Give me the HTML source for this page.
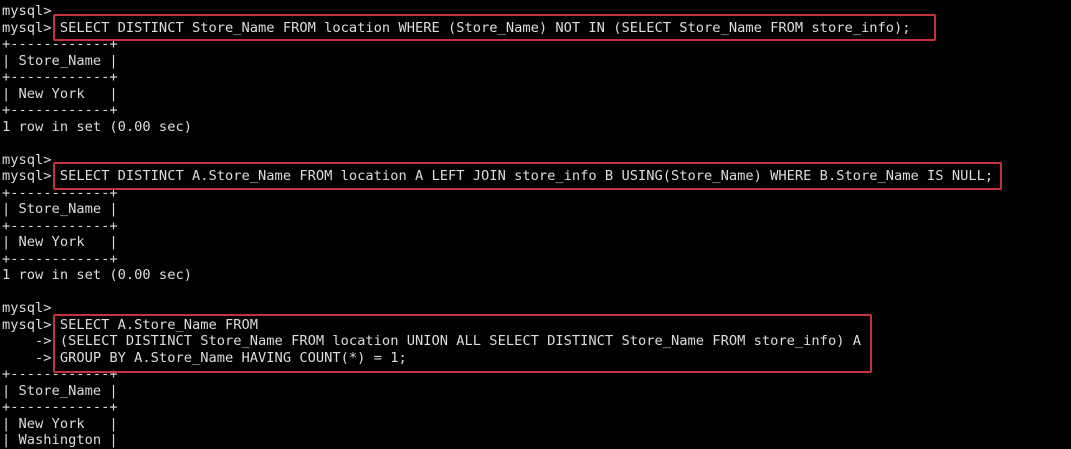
<html><head><style>
body{margin:0;background:#000;width:1071px;height:442px;overflow:hidden;position:relative}
pre{margin:0;position:absolute;left:2px;top:3px;font-family:"DejaVu Sans Mono","Liberation Mono",monospace;font-size:13.72px;line-height:16.5px;color:#dcdcdc}
.b{position:absolute;border:2px solid #c4323c;border-radius:2px}
</style></head><body>
<pre>mysql&gt;
mysql&gt; SELECT DISTINCT Store_Name FROM location WHERE (Store_Name) NOT IN (SELECT Store_Name FROM store_info);
+------------+
| Store_Name |
+------------+
| New York   |
+------------+
1 row in set (0.00 sec)

mysql&gt;
mysql&gt; SELECT DISTINCT A.Store_Name FROM location A LEFT JOIN store_info B USING(Store_Name) WHERE B.Store_Name IS NULL;
+------------+
| Store_Name |
+------------+
| New York   |
+------------+
1 row in set (0.00 sec)

mysql&gt;
mysql&gt; SELECT A.Store_Name FROM
    -&gt; (SELECT DISTINCT Store_Name FROM location UNION ALL SELECT DISTINCT Store_Name FROM store_info) A
    -&gt; GROUP BY A.Store_Name HAVING COUNT(*) = 1;
+------------+
| Store_Name |
+------------+
| New York   |
| Washington |
</pre>
<div class="b" style="left:53px;top:14px;width:879px;height:23px"></div>
<div class="b" style="left:53px;top:162px;width:945px;height:24px"></div>
<div class="b" style="left:53px;top:314px;width:815px;height:55px"></div>
</body></html>
